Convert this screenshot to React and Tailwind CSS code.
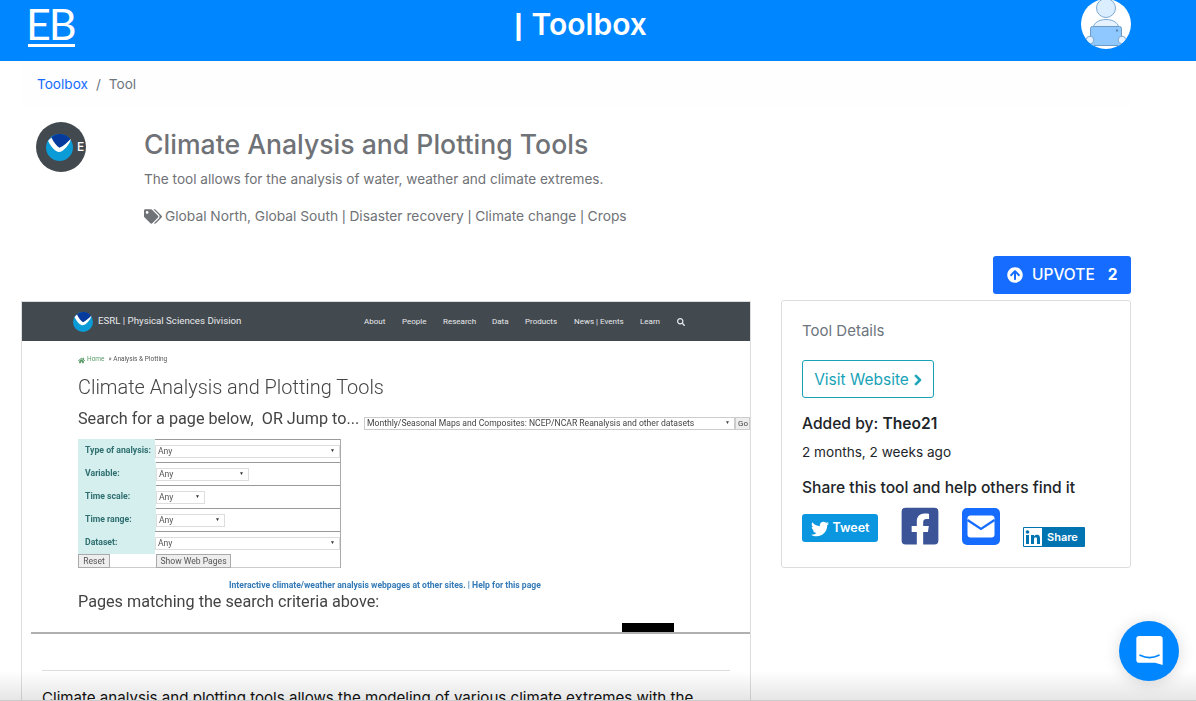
import React from 'react';
import { FaTags, FaArrowCircleUp, FaTwitter, FaFacebookSquare, FaSearch, FaHome, FaChevronRight } from 'react-icons/fa';

const SITE_NAV = [
    ['About', 'w-[38px]'],
    ['People', 'w-[41px]'],
    ['Research', 'w-[49px]'],
    ['Data', 'w-[33px]'],
    ['Products', 'w-[49px]'],
    ['News | Events', 'w-[66px]'],
    ['Learn', 'w-[37px]'],
];

const FILTERS = [
    ['Type of analysis:', 'w-[185px]'],
    ['Variable:', 'w-[93px]'],
    ['Time scale:', 'w-[49px]'],
    ['Time range:', 'w-[69px]'],
    ['Dataset:', 'w-[185px]'],
];

const NoaaLogo = ({ className }) => (
    <svg viewBox="0 0 40 40" className={className}>
        <circle cx="20" cy="20" r="20" fill="#0b9bd7" />
        <path d="M3.500 10A19.500 19.500 0 0 1 37 9C32 13 26 18 20 21C15 18 9 13 3.500 10Z" fill="#063a9c" />
        <path d="M3 10L8 5C12 13 16 18 20 20.500C26 18 32 12 37 7C36 13 30 21 24 25C20 27.500 16 27 12 23C8 19 5 14 3 10Z" fill="#fff" />
    </svg>
);

const Avatar = () => (
    <svg viewBox="0 0 50 50" className="w-[50px] h-[50px] shrink-0 -mt-[1px] rounded-full bg-white">
        <circle cx="25" cy="9" r="9.500" fill="#dbeeff" stroke="#7ea9cf" strokeWidth="1" />
        <path d="M12 30C12 24 18 20.500 25 20.500S38 24 38 30Z" fill="#e6f2ff" stroke="#7ea9cf" strokeWidth="1" />
        <rect x="9.500" y="27.500" width="31" height="19" rx="2" fill="#8fc8ff" stroke="#6d9bc6" strokeWidth="1" />
        <circle cx="36" cy="31.500" r="1.200" fill="#5f8fbc" />
        <circle cx="9" cy="41" r="3.800" fill="#e6f2ff" stroke="#7ea9cf" strokeWidth="1" />
        <circle cx="41" cy="41" r="3.800" fill="#e6f2ff" stroke="#7ea9cf" strokeWidth="1" />
    </svg>
);

const Pipe = () => <span className="font-['Liberation_Sans',sans-serif]">|</span>;

const FakeSelect = ({ width, text }) => (
    <div className={`${width} h-[13px] flex items-center justify-between pl-[2px] pr-[4px] bg-white border border-[#ddd] text-[#555] text-[8.6px]`}>
        <span>{text}</span>
        <span className="text-[5px] text-[#333]">▼</span>
    </div>
);

// the picture of the tool's own website
const SiteShot = () => (
    <div className="relative h-[332px] overflow-hidden font-['Roboto',sans-serif] blur-[0.35px]">
        <div className="h-[39px] bg-[#42494f] flex items-center pl-[51px]">
            <NoaaLogo className="w-[20px] h-[20px]" />
            <span className="ml-[5px] w-[266px] text-[9.7px] text-[#e8eaec]">ESRL | Physical Sciences Division</span>
            {SITE_NAV.map(([label, width]) => (
                <span key={label} className={`${width} text-[8px] text-[#e8eaec]`}>{label}</span>
            ))}
            <FaSearch className="w-[8px] h-[8px] text-[#e8eaec]" />
        </div>

        <div className="pl-[56px]">
            <div className="mt-[14px] h-[10px] flex items-center gap-[2px] text-[6.5px] text-[#555]">
                <FaHome className="w-[7px] h-[7px] text-[#5a9a68]" />
                <span className="text-[#5a9a68]">Home</span>
                <span className="ml-[2px]">» Analysis &amp; Plotting</span>
            </div>
            <div className="mt-[10px] h-[26px] leading-[26px] text-[19.9px] font-light text-[#444]">Climate Analysis and Plotting Tools</div>

            <div className="mt-[7px] h-[22px] flex items-center">
                <span className="w-[286px] text-[16.2px] text-[#444] whitespace-pre">Search for a page below,  OR Jump to...</span>
                <div className="w-[371px] h-[13px] mt-[8px] flex items-center justify-between pl-[2px] pr-[4px] bg-white border border-[#ccc] text-[8.6px] text-[#444] whitespace-nowrap">
                    <span>Monthly/Seasonal Maps and Composites: NCEP/NCAR Reanalysis and other datasets</span>
                    <span className="text-[5px]">▼</span>
                </div>
                <div className="w-[15px] h-[13px] mt-[8px] pl-[2px] bg-[#eee] border border-[#ccc] text-[8px] leading-[11px] text-[#444] overflow-hidden">Go</div>
            </div>

            <div className="mt-[9px] w-[263px] border-r border-[#aaa]">
                {FILTERS.map(([label, width]) => (
                    <div key={label} className="flex h-[23px]">
                        <div className="w-[78px] bg-[#d5eeee] pl-[7px] flex items-center text-[8.7px] font-bold text-[#2f6f6f]">{label}</div>
                        <div className="flex-1 flex items-center border-t border-[#999]">
                            <FakeSelect width={width} text="Any" />
                        </div>
                    </div>
                ))}
                <div className="flex h-[14px] border-b border-[#ccc]">
                    <div className="w-[78px]">
                        <div className="w-[32px] h-[14px] bg-[#eee] border border-[#aaa] text-center text-[8.6px] leading-[12px] text-[#555]">Reset</div>
                    </div>
                    <div className="w-[75px] h-[14px] bg-[#eee] border border-[#aaa] text-center text-[8.6px] leading-[12px] text-[#555]">Show Web Pages</div>
                </div>
            </div>

            <div className="mt-[11px] h-[12px] leading-[12px] ml-[151px] text-[8.6px] font-bold text-[#337ab7] whitespace-nowrap">Interactive climate/weather analysis webpages at other sites. | Help for this page</div>
            <div className="h-[22px] leading-[22px] text-[16.2px] text-[#444]">Pages matching the search criteria above:</div>
        </div>

        <div className="absolute left-[600px] bottom-[2px] w-[52px] h-[9px] bg-black" />
        <div className="absolute left-[9px] right-0 bottom-0 h-[2px] bg-[#b0b0b0]" />
    </div>
);

const ToolDetails = () => (
    <div className="border border-[#ddd] rounded-[3px] h-[268px] pl-[20px] pt-[20px] mt-[6px]">
        <div className="h-[20px] leading-[20px] text-[15px] text-[#6c757d]">Tool Details</div>
        <a className="mt-[19px] w-[132px] h-[38px] flex items-center justify-center gap-[4px] pt-[1px] pl-[1px] border border-[#17a2b8] rounded-[3px] text-[15.5px] text-[#17a2b8]">
            Visit Website
            <FaChevronRight stroke="currentColor" strokeWidth={40} className="w-[10px] h-[12px]" />
        </a>
        <div className="mt-[15px] h-[22px] leading-[22px] text-[15.6px] font-medium text-[#212529]">Added by: <span className="font-semibold">Theo21</span></div>
        <div className="mt-[7px] h-[20px] leading-[20px] text-[13.6px] text-[#212529]">2 months, 2 weeks ago</div>
        <div className="mt-[15px] h-[22px] leading-[22px] text-[15.6px] font-medium text-[#212529]">Share this tool and help others find it</div>

        <div className="flex items-start mt-[9px]">
            <div className="mt-[6px] w-[76px] h-[28px] flex items-center justify-center gap-[4px] pt-[1px] rounded-[3px] bg-[#0b96e0] text-white text-[12.5px] font-semibold">
                <FaTwitter className="w-[18px] h-[18px]" />
                Tweet
            </div>
            <FaFacebookSquare className="ml-[21px] w-[42px] h-[42px] -mt-[3px] text-[#3b5498]" />
            <svg viewBox="0 0 38 38" className="ml-[21px] w-[38px] h-[38px]">
                <rect width="38" height="37" rx="5" fill="#156cff" />
                <rect x="5.500" y="7.500" width="27" height="22" rx="3" fill="#fff" />
                <path d="M5.500 12L19 21L32.500 12" fill="none" stroke="#156cff" strokeWidth="2.200" />
            </svg>
            <div className="ml-[23px] mt-[19px] w-[62px] h-[20px] flex items-center rounded-[1px] bg-[#0073b1] text-white text-[11px] font-semibold">
                <svg viewBox="0 0 18 18" className="ml-[1px] w-[18px] h-[18px]">
                    <rect width="18" height="18" fill="#fff" />
                    <rect x="2" y="7" width="3" height="9" fill="#0073b1" />
                    <circle cx="3.500" cy="4" r="1.800" fill="#0073b1" />
                    <path d="M7 7H10V8.400C10.600 7.400 11.600 6.800 13 6.800C15.400 6.800 16 8.400 16 10.600V16H13V11.200C13 10 12.700 9.300 11.600 9.300C10.500 9.300 10 10.100 10 11.200V16H7Z" fill="#0073b1" />
                </svg>
                <span className="ml-[5px]">Share</span>
            </div>
        </div>
    </div>
);

const App = () => {
    return (
        <div className="relative h-[701px] overflow-hidden bg-white font-['Inter',sans-serif]">
            <header className="h-[61px] bg-[#0086ff] flex items-start pl-[28px] pr-[65px] text-white">
                <div className="w-[47px] mt-[4px] h-[43px] border-b-[3px] border-white font-['Lato',sans-serif] font-normal text-[43px] leading-[39px] tracking-[-2px] whitespace-nowrap">
                    <span className="-ml-[2px]">EB</span>
                </div>
                <div className="flex-1 h-[48px] flex justify-center items-center gap-[9px] text-[30px] font-semibold pl-[5px]">
                    <span className="font-['Liberation_Sans',sans-serif] font-bold">|</span>
                    <span>Toolbox</span>
                </div>
                <Avatar />
            </header>

            <div className="ml-[22px] w-[1109px]">
                <nav className="h-[46px] flex items-center pl-[15px] bg-[#fefefe] text-[13.6px]">
                    <a className="text-[#156cff]">Toolbox</a>
                    <span className="mx-[8px] text-[#6c757d]">/</span>
                    <span className="text-[#6c757d]">Tool</span>
                </nav>

                <section className="flex h-[149px] pt-[15px] pl-[14px] text-[#6f7276]">
                    <div className="w-[50px] h-[50px] rounded-full bg-[#42494f] flex items-center overflow-hidden pl-[10px] shrink-0">
                        <NoaaLogo className="w-[27px] h-[27px] shrink-0" />
                        <span className="ml-[4px] text-[12px] font-medium text-white">E</span>
                    </div>
                    <div className="ml-[58px]">
                        <h1 className="text-[26.6px] leading-[44px] font-medium">Climate Analysis and Plotting Tools</h1>
                        <p className="mt-[3px] text-[13.6px] leading-[21px]">The tool allows for the analysis of water, weather and climate extremes.</p>
                        <div className="mt-[16px] flex items-center text-[13.77px] leading-[21px]">
                            <FaTags className="w-[18px] h-[15px] mr-[3px]" />
                            <span>Global North, Global South <Pipe /> Disaster recovery <Pipe /> Climate change <Pipe /> Crops</span>
                        </div>
                    </div>
                </section>

                <div className="flex gap-[30px]">
                    <main className="-ml-[1px] w-[730px] h-[500px] border-x border-t border-[#ddd] shrink-0 mt-[45px]">
                        <SiteShot />
                        <div className="mx-[20px] mt-[36px] border-t border-[#ddd] pt-[15px] text-[15.1px] leading-[24px] text-[#111] whitespace-nowrap">
                            Climate analysis and plotting tools allows the modeling of various climate extremes with the
                        </div>
                    </main>
                    <aside className="flex-1">
                        <div className="flex justify-end">
                            <button className="w-[138px] h-[38px] flex items-center pl-[14px] rounded-[3px] bg-[#156cff] text-white text-[15.5px] font-medium">
                                <FaArrowCircleUp className="w-[16px] h-[16px]" />
                                <span className="ml-[9px]">UPVOTE</span>
                                <span className="ml-[13px] font-bold">2</span>
                            </button>
                        </div>
                        <ToolDetails />
                    </aside>
                </div>
            </div>

            {/* fade at the bottom of the window */}
            <div className="absolute inset-x-0 bottom-0 h-[30px] bg-gradient-to-b from-transparent to-black/10 border-b border-[#ccc] pointer-events-none" />

            <div className="absolute right-[17px] bottom-[20px] w-[60px] h-[60px] rounded-full bg-[#0086ff] shadow-[0_2px_16px_rgba(0,0,0,0.15)] flex items-center justify-center">
                <svg viewBox="0 0 30 34" className="w-[29px] h-[32px]">
                    <path d="M4 1H26C28 1 29 2 29 4V32L21 29.500H4C2 29.500 1 28.500 1 26.500V4C1 2 2 1 4 1Z" fill="#fff" />
                    <path d="M5 21.500C11 24.500 19 24.500 25 21.500" fill="none" stroke="#0086ff" strokeWidth="1.800" strokeLinecap="round" />
                </svg>
            </div>
        </div>
    );
};

export default App;
